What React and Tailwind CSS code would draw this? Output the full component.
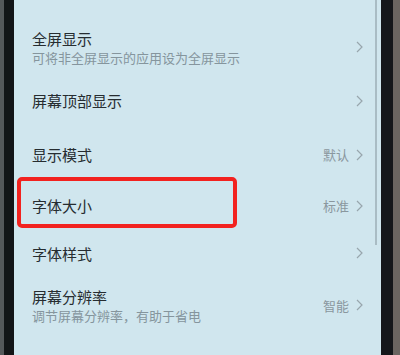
const rows = [
  { title: '全屏显示', sub: '可将非全屏显示的应用设为全屏显示', h: 'h-[54px]' },
  { title: '屏幕顶部显示', h: 'h-[53px]' },
  { title: '显示模式', value: '默认', h: 'h-[55px]' },
  { title: '字体大小', value: '标准', h: 'h-[47px]' },
  { title: '字体样式', h: 'h-[48px]' },
  { title: '屏幕分辨率', sub: '调节屏幕分辨率，有助于省电', value: '智能', h: 'h-[56px]' },
]

function Chevron() {
  return (
    <svg width="7" height="12" viewBox="0 0 7 12" className="shrink-0">
      <path d="M1 1l5 5-5 5" fill="none" stroke="#98a6ad" strokeWidth="1.2" />
    </svg>
  )
}

export default function App() {
  return (
    <div
      className="flex h-[355px] w-[400px] overflow-hidden"
      style={{ fontFamily: '"Noto Sans CJK SC", "Noto Sans", sans-serif' }}
    >
      <div className="w-[4px] bg-[#55585a]" />
      <div className="w-[10px] bg-[#131517]" />

      <div className="relative flex-1 bg-[#d0e6ee] pt-[20px] pl-[18px] pr-[18px]">
        {rows.map((row) => (
          <div key={row.title} className={`flex items-center ${row.h}`}>
            <div className="flex-1">
              <p className="text-[15px] leading-none text-[#262c30]">{row.title}</p>
              {row.sub && (
                <p className="mt-[5px] text-[13px] leading-none text-[#85959d]">{row.sub}</p>
              )}
            </div>
            {row.value && (
              <span className="mr-[7px] text-[13px] leading-none text-[#8a979e]">{row.value}</span>
            )}
            <Chevron />
          </div>
        ))}

        {/* scroll indicator */}
        <div className="absolute right-[4px] top-0 h-[245px] w-[2px] bg-[#a9bcc4]" />

        {/* annotation box */}
        <div className="absolute left-[3px] top-[177px] h-[51px] w-[220px] rounded-[5px] border-[4px] border-[#f2221f]" />
      </div>

      <div className="w-[12px] bg-[#15171b]" />
      <div className="w-[7px] bg-[#6b6561]" />
    </div>
  )
}
